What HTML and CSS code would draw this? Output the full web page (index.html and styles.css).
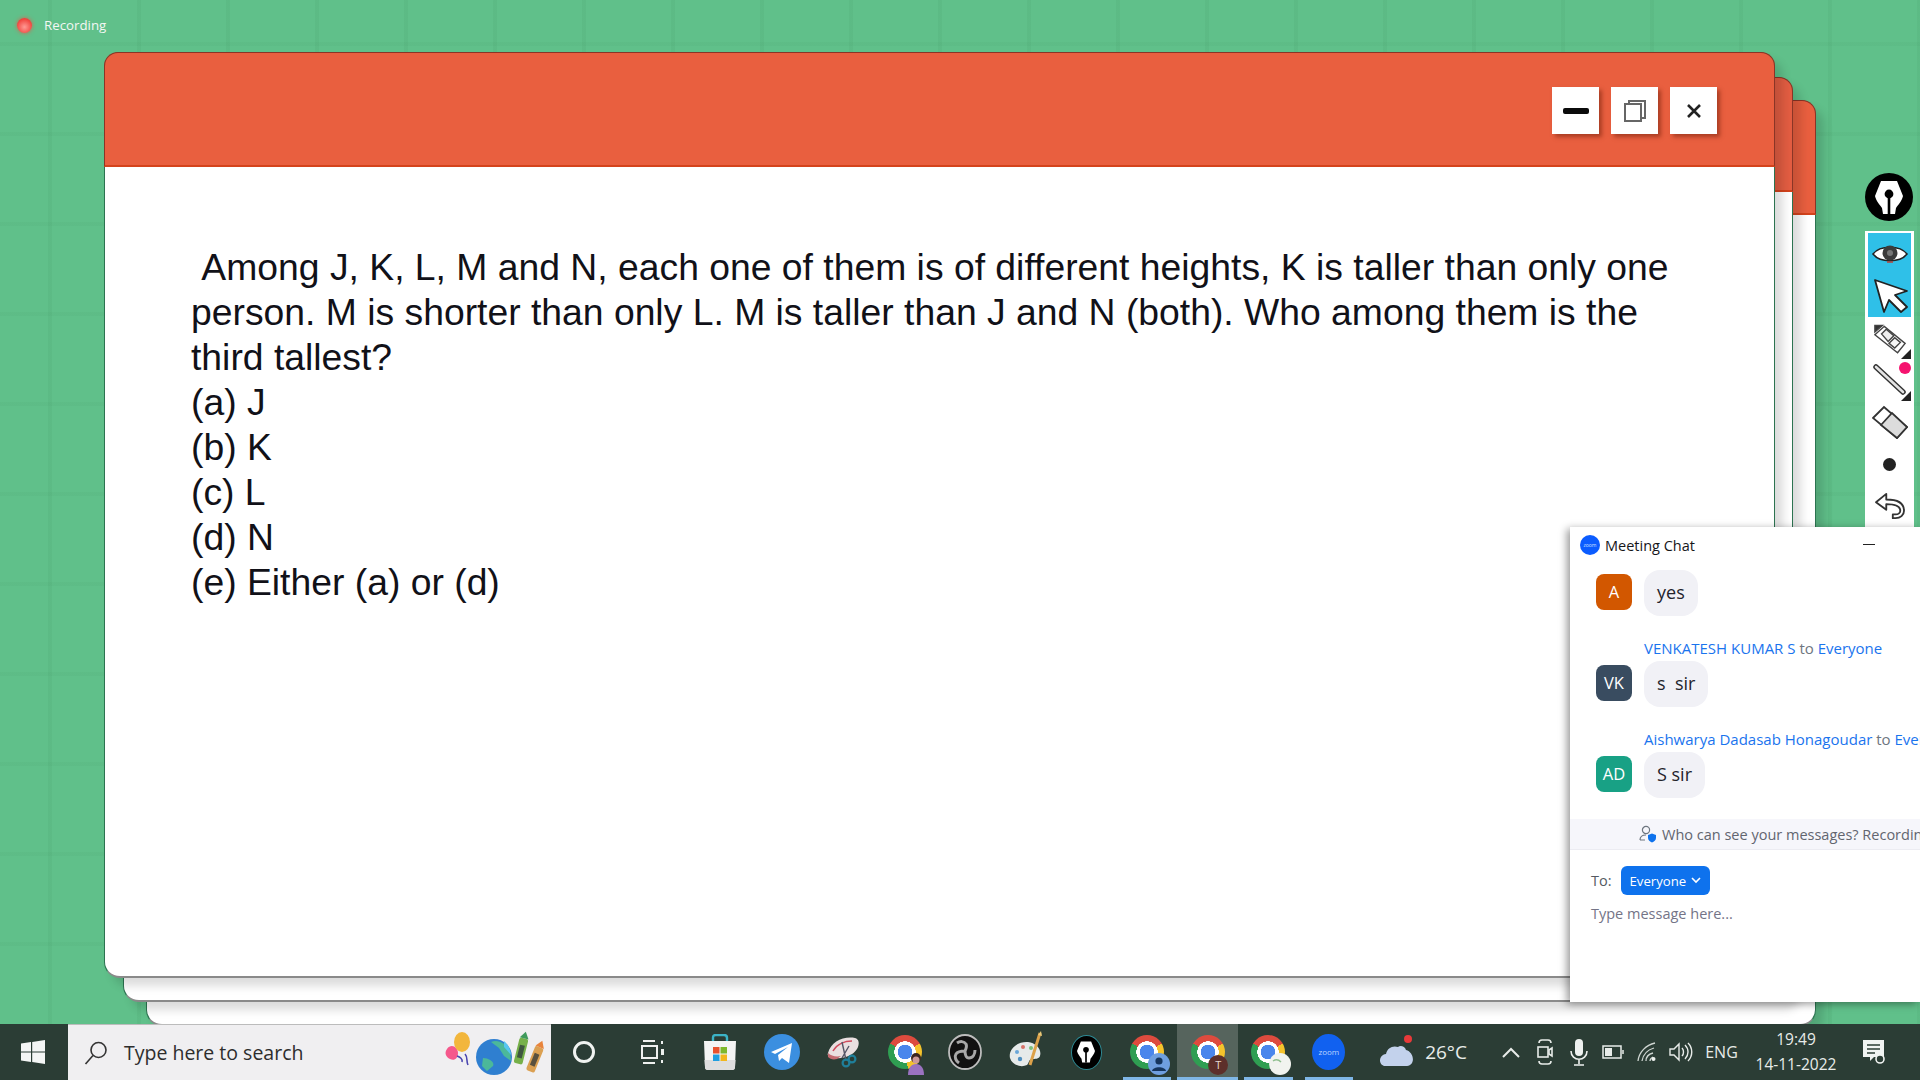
FILE: index.html
```html
<!DOCTYPE html>
<html lang="en">
<head>
    <meta charset="UTF-8">
    <title>Meeting recording</title>
    <link rel="stylesheet" href="styles.css">
</head>
<body>

    <svg class="defs" width="0" height="0">
        <symbol id="nib" viewBox="0 0 28 33">
            <path d="M6 0h16l6 15c-1 5-5 9-7 12l-1 6H8l-1-6C5 24 1 20 0 15z" fill="#fff"/>
            <circle cx="14" cy="13" r="4.400" fill="#000"/>
            <rect x="12.700" y="14" width="2.600" height="19" fill="#000"/>
        </symbol>
    </svg>

    <div id="desktop">
        <div class="recording"><span class="rec-dot"></span>Recording</div>

        <!-- stack of slides, back to front -->
        <div class="window win-back"><div class="win-head"></div></div>
        <div class="window win-mid"><div class="win-head"></div></div>
        <div class="window win-front">
            <div class="win-head">
                <button class="win-btn">
                    <svg width="26" height="6"><rect width="26" height="6" rx="2" fill="#0b0b0b"/></svg>
                </button>
                <button class="win-btn">
                    <svg width="24" height="24" viewBox="0 0 24 24" fill="#fff" stroke="#666" stroke-width="2"><rect x="6" y="2" width="16" height="17"/><rect x="2" y="5" width="16" height="17"/></svg>
                </button>
                <button class="win-btn">
                    <svg width="16" height="16" viewBox="0 0 16 16" stroke="#222" stroke-width="2.600"><path d="M2 2l12 12M14 2L2 14"/></svg>
                </button>
            </div>
            <div class="win-body">
                <p class="question">&nbsp;Among J, K, L, M and N, each one of them is of different heights, K is taller than only one person. M is shorter than only L. M is taller than J and N (both). Who among them is the third tallest?</p>
                <div class="option">(a) J</div>
                <div class="option">(b) K</div>
                <div class="option">(c) L</div>
                <div class="option">(d) N</div>
                <div class="option">(e) Either (a) or (d)</div>
            </div>
        </div>

        <div class="pen-logo">
            <svg width="28" height="33"><use href="#nib"/></svg>
        </div>

        <div class="toolbar">
            <div class="tool tool-on">
                <svg width="36" height="24" viewBox="0 0 36 24"><path d="M1 12C8 3 28 3 35 12 28 21 8 21 1 12z" fill="#fff" stroke="#222" stroke-width="1.600"/><circle cx="18" cy="11" r="7.500" fill="#3b3b3b"/><circle cx="18" cy="11" r="3" fill="#777"/><path d="M15 20h6" stroke="#c0392b" stroke-width="1.400"/></svg>
            </div>
            <div class="tool tool-on">
                <svg width="36" height="34" viewBox="0 0 36 34"><path d="M3 1l32 11-12 4 12 12-6 5-12-12-5 12z" fill="#fff" stroke="#222" stroke-width="1.800" stroke-linejoin="round"/></svg>
            </div>
            <div class="tool tool-marker">
                <svg width="34" height="33" viewBox="0 0 36 34" fill="#fff" stroke="#444" stroke-width="1.500"><path d="M2 11L12 2l22 18-8 10z"/><path d="M9 10l5-5 8 7-6 6z" fill="#eee"/><path d="M17 20l6-6 6 5-6 6z" fill="#f6f6f6"/><path d="M2 8V1h8z" fill="#333"/></svg>
                <span class="corner"></span>
            </div>
            <div class="tool">
                <svg width="34" height="32" viewBox="0 0 34 32"><path d="M3 3l27 25" stroke="#333" stroke-width="5.500" stroke-linecap="round"/><path d="M3 3l27 25" stroke="#e4e4e4" stroke-width="2.600" stroke-linecap="round"/></svg>
                <span class="corner"></span>
                <span class="ink-dot"></span>
            </div>
            <div class="tool">
                <svg width="36" height="34" viewBox="0 0 36 34" fill="#fff" stroke="#333" stroke-width="1.800"><path d="M1 13L12 2l23 20-10 11z"/><path d="M9 20L20 8l15 14-10 11z" fill="#dcdcdc"/></svg>
            </div>
            <div class="tool"><span class="brush-size"></span></div>
            <div class="tool">
                <svg width="32" height="28" viewBox="0 0 34 30" fill="none" stroke="#333" stroke-width="2"><path d="M2 11l11-9v6c9 0 19 2 19 12 0 5-4 8-9 8h-3v-4h3c3 0 5-2 5-4 0-5-7-7-15-7v6z" fill="#fff" stroke-linejoin="round"/></svg>
            </div>
        </div>

        <div class="chat">
            <div class="chat-head">
                <span class="zoom-mark">zoom</span>
                <span class="chat-title">Meeting Chat</span>
                <span class="chat-min"></span>
            </div>
            <div class="chat-list">
                <div class="msg">
                    <span class="avatar av-orange">A</span>
                    <span class="bubble">yes</span>
                </div>
                <div class="sender">VENKATESH KUMAR S <i>to</i> Everyone</div>
                <div class="msg">
                    <span class="avatar av-slate">VK</span>
                    <span class="bubble">s&nbsp; sir</span>
                </div>
                <div class="sender">Aishwarya Dadasab Honagoudar <i>to</i> Everyone</div>
                <div class="msg">
                    <span class="avatar av-teal">AD</span>
                    <span class="bubble">S sir</span>
                </div>
            </div>
            <div class="chat-notice">
                <svg width="18" height="18" viewBox="0 0 18 18"><circle cx="7" cy="5" r="3.600" fill="none" stroke="#6e7680" stroke-width="1.200"/><path d="M1 15c0-4 3-5 6-5M1 15h5" fill="none" stroke="#6e7680" stroke-width="1.200"/><path d="M9 10l4-1.500 4 1.500v3c0 2-2 4-4 4.500-2-.5-4-2.500-4-4.500z" fill="#0e72ed"/></svg>
                <span>Who can see your messages? Recording on</span>
            </div>
            <div class="chat-compose">
                <div class="to-row">
                    <span>To:</span>
                    <span class="to-btn">Everyone
                        <svg width="10" height="7" viewBox="0 0 10 7" fill="none" stroke="#fff" stroke-width="1.600"><path d="M1 1l4 4 4-4"/></svg>
                    </span>
                </div>
                <div class="placeholder">Type message here...</div>
            </div>
        </div>
    </div>

    <div id="taskbar">
        <div class="start">
            <svg width="24" height="24" viewBox="0 0 24 24" fill="#f4f6f5"><path d="M0 3.500l10-1.400v9.300H0zM11.200 2L24 0v11.400H11.200zM0 12.600h10v9.300L0 20.500zM11.200 12.600H24V24l-12.800-2z"/></svg>
        </div>
        <div class="search">
            <svg width="24" height="24" viewBox="0 0 24 24" fill="none" stroke="#333" stroke-width="1.600"><circle cx="14.500" cy="9" r="7.500"/><path d="M9 14.500L1.500 23"/></svg>
            <span class="search-text">Type here to search</span>
            <svg class="doodle" width="106" height="46" viewBox="0 0 106 46">
                <path d="M6 19c4-6 11-2 11 4s-4 8-8 6-6-6-3-10z" fill="#f5588c"/>
                <ellipse cx="21" cy="12" rx="8" ry="10" fill="#f2b63c"/>
                <path d="M16 26c3 1 6 3 5 6M24 24c3 3 1 7 3 11" stroke="#4a46b0" stroke-width="1.600" fill="none"/>
                <ellipse cx="53" cy="27" rx="18" ry="18" fill="#2f7fd0"/>
                <path d="M50 12c6-3 14 0 19 9l1 10-7-5-5-8zM42 28c6 0 12 4 10 8l-6 5-5-5z" fill="#4bb89a"/>
                <path d="M63 11c4 3 7 9 7 14l-7-8z" fill="#56c6ee"/>
                <g transform="rotate(14 80 19)"><rect x="76" y="8" width="9" height="26" rx="2" fill="#76b04a"/><path d="M76 8l4.500-7 4.500 7z" fill="#3f9a5c"/><rect x="78" y="15" width="5" height="13" fill="#3e5640"/></g>
                <g transform="rotate(22 93 30)"><rect x="89" y="16" width="9" height="26" rx="2" fill="#dba052"/><path d="M89 16l4.500-7 4.500 7z" fill="#e8843c"/><rect x="91" y="23" width="5" height="13" fill="#59503e"/></g>
            </svg>
        </div>

        <div class="cell cell-ring"><span class="ring"></span></div>
        <div class="cell cell-view">
            <svg width="24" height="26" viewBox="0 0 24 26" fill="none" stroke="#eef1ef" stroke-width="2"><path d="M2 2h12M2 24h12"/><rect x="1" y="7" width="15" height="12"/><path d="M21 2v3M21 21v3"/><rect x="20" y="10" width="3" height="6" fill="#eef1ef" stroke="none"/></svg>
        </div>
        <div class="app app-wide">
            <svg width="36" height="36" viewBox="0 0 36 36"><path d="M11 8V4c0-2 1-3 3-3h8c2 0 3 1 3 3v4" fill="none" stroke="#3bb3c6" stroke-width="2.400"/><path d="M2 7h32l-1 26c0 2-1 3-3 3H6c-2 0-3-1-3-3z" fill="#f4f4f4"/><path d="M2.500 26h31l-.5 7c0 2-1 3-3 3H6c-2 0-3-1-3-3z" fill="#dedede"/><rect x="11" y="13" width="6.500" height="6.500" fill="#e8522e"/><rect x="18.500" y="13" width="6.500" height="6.500" fill="#7eb82c"/><rect x="11" y="20.500" width="6.500" height="6.500" fill="#1f9ee0"/><rect x="18.500" y="20.500" width="6.500" height="6.500" fill="#f2b71c"/></svg>
        </div>
        <div class="app app-wide">
            <svg width="36" height="36" viewBox="0 0 36 36"><circle cx="18" cy="18" r="18" fill="#3b8fe0"/><path d="M7 18L28 9l-3 20-7-5-3 3-1-6 10-8-13 7z" fill="#fff"/></svg>
        </div>
        <div class="app app-wide">
            <svg width="36" height="36" viewBox="0 0 36 36"><path d="M3 19C6 8 18 2 30 4c4 1 5 6 2 11-5 8-17 11-26 8-3-1-4-2-3-4z" fill="#eadfe0"/><path d="M3 19c3 3 8 4 13 3l-4 3c-4 1-7 0-9-2z" fill="#c46a70"/><path d="M8 17C12 10 20 7 27 7" stroke="#d04a5c" stroke-width="1.500" fill="none"/><path d="M17 8l4 18M24 12l-7 12" stroke="#556" stroke-width="1.400"/><circle cx="21" cy="29" r="3.400" fill="none" stroke="#1f7f9a" stroke-width="2.200"/><circle cx="27" cy="25" r="3.400" fill="none" stroke="#1f7f9a" stroke-width="2.200"/></svg>
        </div>
        <div class="app badged">
            <span class="chrome"></span>
            <svg class="badge" width="22" height="24" viewBox="0 0 22 24"><circle cx="11" cy="7" r="5" fill="#3a2420"/><circle cx="11" cy="9" r="3.500" fill="#c99"/><path d="M3 24c0-7 3-11 8-11s8 4 8 11z" fill="#9a72c0"/></svg>
        </div>
        <div class="app">
            <svg width="34" height="36" viewBox="0 0 34 36" fill="none"><ellipse cx="17" cy="18" rx="16" ry="17" fill="#111" stroke="#bdbdbd" stroke-width="1.800"/><path d="M9 9c3-2 7-2 9 1 1 2 0 5-1 7M27 16c0 4-2 8-6 8-3 0-4-4-4-7M11 29c-3-2-5-6-3-9 2-3 6-3 9-3" stroke="#a8a8a8" stroke-width="3"/></svg>
        </div>
        <div class="app">
            <svg width="36" height="42" viewBox="0 0 36 42"><path d="M2 27C0 18 10 10 20 11c8 1 14 7 12 14-1 3-5 3-8 3s-3 4-5 6c-6 3-15 0-17-7z" fill="#e6eaea"/><circle cx="9" cy="21" r="2" fill="#6aa6d8"/><circle cx="15" cy="16" r="2" fill="#d8736a"/><circle cx="23" cy="17" r="2" fill="#7abf7a"/><circle cx="12" cy="28" r="2.200" fill="#4f8fc0"/><path d="M32 2L22 34" stroke="#dca14a" stroke-width="3"/><path d="M33 0l1 5-4-1z" fill="#e8c878"/></svg>
        </div>
        <div class="app">
            <span class="pen-app"><svg width="18" height="22"><use href="#nib"/></svg></span>
        </div>
        <div class="app badged running">
            <span class="chrome"></span>
            <svg class="badge" width="22" height="22" viewBox="0 0 22 22"><circle cx="11" cy="11" r="11" fill="#6f9fdf"/><circle cx="11" cy="8" r="3.600" fill="#16365e"/><path d="M4 18c1-5 13-5 14 0z" fill="#16365e"/></svg>
        </div>
        <div class="app badged running active">
            <span class="chrome"></span>
            <span class="badge badge-t">T</span>
        </div>
        <div class="app badged running">
            <span class="chrome"></span>
            <svg class="badge" width="22" height="22" viewBox="0 0 22 22"><circle cx="11" cy="11" r="11" fill="#f1f3ef"/><path d="M4 8c3-2 6-1 8 1" stroke="#8fbf8f" stroke-width="1.500" fill="none"/></svg>
        </div>
        <div class="app running">
            <span class="zoom-app">zoom</span>
        </div>

        <div class="weather">
            <svg width="36" height="36" viewBox="0 0 36 36"><path d="M7 32c-8 0-8-11 0-12 1-6 7-9 12-7 2-2 7-1 8 3 8 2 10 15 1 16z" fill="#c3d2ec"/><circle cx="29" cy="5" r="4" fill="#e93a3a"/></svg>
            <span>26°C</span>
        </div>

        <div class="tray">
            <div class="tray-cell">
                <svg width="18" height="11" viewBox="0 0 18 11" fill="none" stroke="#e8ece9" stroke-width="2"><path d="M1 10l8-8 8 8"/></svg>
            </div>
            <div class="tray-cell">
                <svg width="18" height="28" viewBox="0 0 18 28" fill="none" stroke="#e8ece9" stroke-width="1.600"><path d="M3 5c0-2 1-3 3-3h6c2 0 3 1 3 3M3 23c0 2 1 3 3 3h6c2 0 3-1 3-3"/><rect x="2" y="9" width="10" height="10"/><path d="M13 12l3-2v8l-3-2z"/></svg>
            </div>
            <div class="tray-cell">
                <svg width="18" height="28" viewBox="0 0 18 28" fill="none" stroke="#eef1ef" stroke-width="1.600"><rect x="5" y="1" width="8" height="17" rx="4" fill="#eef1ef" stroke="none"/><path d="M1 13c0 11 16 11 16 0M9 21v5M4 27h10"/></svg>
            </div>
            <div class="tray-cell">
                <svg width="22" height="14" viewBox="0 0 22 14" fill="none" stroke="#e8ece9" stroke-width="1.500"><rect x="1" y="1" width="18" height="12"/><rect x="3" y="3" width="7" height="8" fill="#e8ece9" stroke="none"/><path d="M21 5v4"/></svg>
            </div>
            <div class="tray-cell">
                <svg width="20" height="20" viewBox="0 0 20 20" fill="none" stroke="#cfd6d2" stroke-width="1.300"><path d="M1 19C2 10 9 3 18 1M5 19c1-6 5-11 12-13M9 19c0-4 3-7 7-8M13 19c0-2 1-3 3-4"/><circle cx="16.500" cy="17" r="2" fill="#eef1ef" stroke="none"/></svg>
            </div>
            <div class="tray-cell">
                <svg width="24" height="22" viewBox="0 0 24 22" fill="none" stroke="#e8ece9" stroke-width="1.400"><path d="M1 8h4l5-5v16l-5-5H1z"/><path d="M13 7c2 2 2 6 0 8M16 4c4 4 4 10 0 14M19 2c5 5 5 13 0 18"/></svg>
            </div>
            <div class="tray-lang">ENG</div>
            <div class="clock">
                <span>19:49</span>
                <span>14-11-2022</span>
            </div>
            <div class="notif">
                <svg width="24" height="26" viewBox="0 0 24 26"><path d="M1 1h21v17H12l-4 4v-4H1z" fill="#f1f4f2"/><path d="M5 6h13M5 10h13M5 14h8" stroke="#2b3d35" stroke-width="1.600"/><circle cx="18" cy="20" r="4" fill="#2b3d35" stroke="#f1f4f2" stroke-width="1.600"/></svg>
            </div>
        </div>
    </div>

</body>
</html>
```

FILE: styles.css
```css
* {
    box-sizing: border-box;
}
html, body {
    margin: 0;
    height: 100%;
}
body {
    width: 1920px;
    height: 1080px;
    overflow: hidden;
    display: flex;
    flex-direction: column;
    font-family: "Open Sans", sans-serif;
}
.defs {
    position: absolute;
}

/* desktop */
#desktop {
    position: relative;
    flex: 1;
    overflow: hidden;
    background-color: #60c08a;
    background-image:
        repeating-linear-gradient(90deg, transparent 0 48px, rgba(60, 140, 90, 0.1) 48px 52px, transparent 52px 89px),
        repeating-linear-gradient(0deg, transparent 0 78px, rgba(60, 140, 90, 0.07) 78px 82px, transparent 82px 90px);
}
.recording {
    position: absolute;
    left: 17px;
    top: 15px;
    display: flex;
    align-items: center;
    gap: 12px;
    font-size: 13.300px;
    line-height: 20px;
    color: #f2f7f3;
}
.rec-dot {
    width: 15px;
    height: 15px;
    border-radius: 50%;
    background: radial-gradient(circle at 50% 60%, #ff9a94, #f0413a 70%);
    box-shadow: 0 0 4px #d9604f;
}

/* slide windows */
.window {
    position: absolute;
    background: #fff;
    border-radius: 16px;
    border: 1px solid #2c7350;
    border-bottom: 2px solid #8a8a8a;
    box-shadow: 8px 8px 10px rgba(0, 0, 0, 0.14);
}
.win-head {
    background: #e95f3f;
    border: 1px solid #8a3526;
    border-bottom: 2px solid #d4431c;
    border-radius: 14px 14px 0 0;
    margin: -1px -1px 0;
}
.win-front {
    left: 104px;
    top: 52px;
    width: 1671px;
    height: 926px;
}
.win-front .win-head {
    height: 115px;
    display: flex;
    justify-content: flex-end;
    gap: 12px;
    padding: 34px 57px 0 0;
}
.win-mid {
    left: 123px;
    top: 77px;
    width: 1670px;
    height: 925px;
}
.win-mid .win-head {
    height: 115px;
    background: #e35d42;
}
.win-back {
    left: 146px;
    top: 100px;
    width: 1670px;
    height: 926px;
}
.win-back .win-head {
    height: 115px;
}
.win-btn {
    width: 47px;
    height: 47px;
    padding: 0;
    border: none;
    background: #fff;
    display: flex;
    align-items: center;
    justify-content: center;
    box-shadow: 3px 3px 4px rgba(110, 30, 10, 0.5);
}
.win-body {
    padding: 78px 0 0 86px;
    font-family: "Liberation Sans", Arial, sans-serif;
    font-size: 37.300px;
    line-height: 45px;
    color: #111118;
}
.question {
    margin: 0;
    width: 1500px;
}

/* pen toolbar */
.pen-logo {
    position: absolute;
    left: 1865px;
    top: 173px;
    width: 48px;
    height: 48px;
    border-radius: 50%;
    background: #000;
    display: flex;
    align-items: center;
    justify-content: center;
}
.toolbar {
    position: absolute;
    left: 1865px;
    top: 231px;
    width: 49px;
    height: 300px;
    padding: 2px 3px;
    background: #fff;
    display: flex;
    flex-direction: column;
}
.tool {
    position: relative;
    height: 42px;
    flex: none;
    display: flex;
    align-items: center;
    justify-content: center;
}
.tool-on {
    background: #2fc0e8;
}
.tool-marker {
    padding-top: 4px;
}
.corner {
    position: absolute;
    right: 0;
    bottom: 0;
    border-left: 10px solid transparent;
    border-bottom: 10px solid #222;
}
.ink-dot {
    position: absolute;
    right: 0;
    top: 3px;
    width: 12px;
    height: 12px;
    border-radius: 50%;
    background: #f5136f;
}
.brush-size {
    width: 13px;
    height: 13px;
    border-radius: 50%;
    background: #222;
}

/* zoom chat */
.chat {
    position: absolute;
    left: 1570px;
    top: 527px;
    width: 350px;
    height: 475px;
    background: #fff;
    overflow: hidden;
    display: flex;
    flex-direction: column;
    box-shadow: -3px 2px 8px rgba(0, 0, 0, 0.4);
    white-space: nowrap;
}
.chat-head {
    height: 43px;
    flex: none;
    padding: 0 45px 7px 10px;
    display: flex;
    align-items: center;
}
.zoom-mark {
    width: 20px;
    height: 20px;
    border-radius: 50%;
    background: #0b5cff;
    color: #cfe0ff;
    font-size: 5px;
    line-height: 20px;
    text-align: center;
}
.chat-title {
    margin-left: 5px;
    font-size: 14.500px;
    color: #16161a;
}
.chat-min {
    margin-left: auto;
    width: 12px;
    height: 1px;
    background: #222;
    margin-bottom: 2px;
}
.chat-list {
    height: 249px;
    flex: none;
    padding-left: 26px;
}
.msg {
    display: flex;
    align-items: center;
    gap: 12px;
    height: 46px;
}
.avatar {
    width: 36px;
    height: 36px;
    margin-bottom: 3px;
    border-radius: 8px;
    color: #fff;
    font-size: 16.500px;
    line-height: 36px;
    text-align: center;
}
.av-orange {
    background: #d25700;
}
.av-slate {
    background: #394c60;
}
.av-teal {
    background: #18a185;
}
.bubble {
    height: 46px;
    padding: 0 13px;
    border-radius: 16px;
    background: #f1f1f6;
    color: #23232b;
    font-size: 18px;
    line-height: 44px;
}
.sender {
    margin: 22px 0 3px 48px;
    font-size: 15px;
    line-height: 20px;
    color: #1a74ee;
}
.sender i {
    font-style: normal;
    color: #6e7680;
}
.chat-notice {
    height: 31px;
    flex: none;
    padding-left: 69px;
    background: #f6f6fb;
    border-bottom: 1px solid #ececf2;
    display: flex;
    align-items: center;
    gap: 5px;
    font-size: 14.500px;
    color: #62656f;
}
.chat-notice svg {
    flex: none;
}
.chat-compose {
    padding: 16px 21px;
    font-size: 14.500px;
}
.to-row {
    display: flex;
    align-items: center;
    gap: 9px;
    color: #555a62;
}
.to-btn {
    height: 29px;
    padding: 0 9px;
    border-radius: 6px;
    background: #0e72ed;
    color: #fff;
    display: flex;
    align-items: center;
    gap: 5px;
    font-size: 13.200px;
}
.placeholder {
    margin-top: 9px;
    line-height: 20px;
    color: #747487;
}

/* windows taskbar */
#taskbar {
    position: relative;
    height: 56px;
    flex: none;
    display: flex;
    align-items: center;
    background: #2b3d35;
    color: #e8ece9;
}
.start {
    width: 68px;
    display: flex;
    justify-content: center;
    padding-right: 2px;
}
.search {
    width: 483px;
    height: 56px;
    padding-left: 16px;
    background: #f0eff1;
    border-top: 1px solid #bcbcbc;
    display: flex;
    align-items: center;
    gap: 16px;
    color: #2d2d2d;
}
.search-text {
    font-size: 19.500px;
}
.doodle {
    margin-left: auto;
    margin-right: 4px;
}
.cell {
    height: 56px;
    display: flex;
    align-items: center;
    justify-content: center;
}
.cell-ring {
    width: 66px;
}
.cell-view {
    width: 72px;
}
.ring {
    width: 22px;
    height: 22px;
    border-radius: 50%;
    border: 3px solid #f0f3f1;
}
.app {
    position: relative;
    width: 60.600px;
    height: 56px;
    display: flex;
    align-items: center;
    justify-content: center;
}
.app-wide {
    width: 61.800px;
}
.running::after {
    content: "";
    position: absolute;
    left: 6px;
    right: 6px;
    bottom: 0;
    height: 3px;
    background: #7fb6e6;
}
.active {
    background: #56645d;
}
.active::after {
    left: 0;
    right: 0;
}
.chrome {
    width: 34px;
    height: 34px;
    border-radius: 50%;
    background:
        radial-gradient(circle, #4a86ec 0 30%, #fff 31% 44%, transparent 45%),
        conic-gradient(#dd4b3e 0 60deg, #f5c32c 60deg 170deg, #2f9e52 170deg 300deg, #dd4b3e 300deg);
}
.badge {
    position: absolute;
    left: 31px;
    bottom: 5px;
}
.badge-t {
    width: 20px;
    height: 20px;
    border-radius: 50%;
    background: #5d2f2a;
    color: #e6d8d0;
    font-size: 11px;
    line-height: 20px;
    text-align: center;
}
.pen-app {
    width: 31px;
    height: 35px;
    border-radius: 50%;
    background: #000;
    border: 1px solid #2e8a94;
    display: flex;
    align-items: center;
    justify-content: center;
}
.zoom-app {
    width: 33px;
    height: 36px;
    border-radius: 50%;
    background: #1161f0;
    color: #bcd4ff;
    font-size: 8px;
    line-height: 36px;
    text-align: center;
}
.weather {
    margin-left: 20px;
    display: flex;
    align-items: center;
    gap: 10px;
    font-size: 19px;
}
.tray {
    margin-left: auto;
    display: flex;
    align-items: center;
}
.tray-cell {
    width: 34px;
    display: flex;
    justify-content: center;
}
.tray-lang {
    width: 47px;
    text-align: center;
    font-size: 16px;
}
.clock {
    width: 92px;
    margin-left: 5px;
    display: flex;
    flex-direction: column;
    align-items: center;
    font-size: 15.500px;
    line-height: 25px;
}
.notif {
    width: 78px;
    padding-right: 15px;
    display: flex;
    justify-content: center;
}
```
